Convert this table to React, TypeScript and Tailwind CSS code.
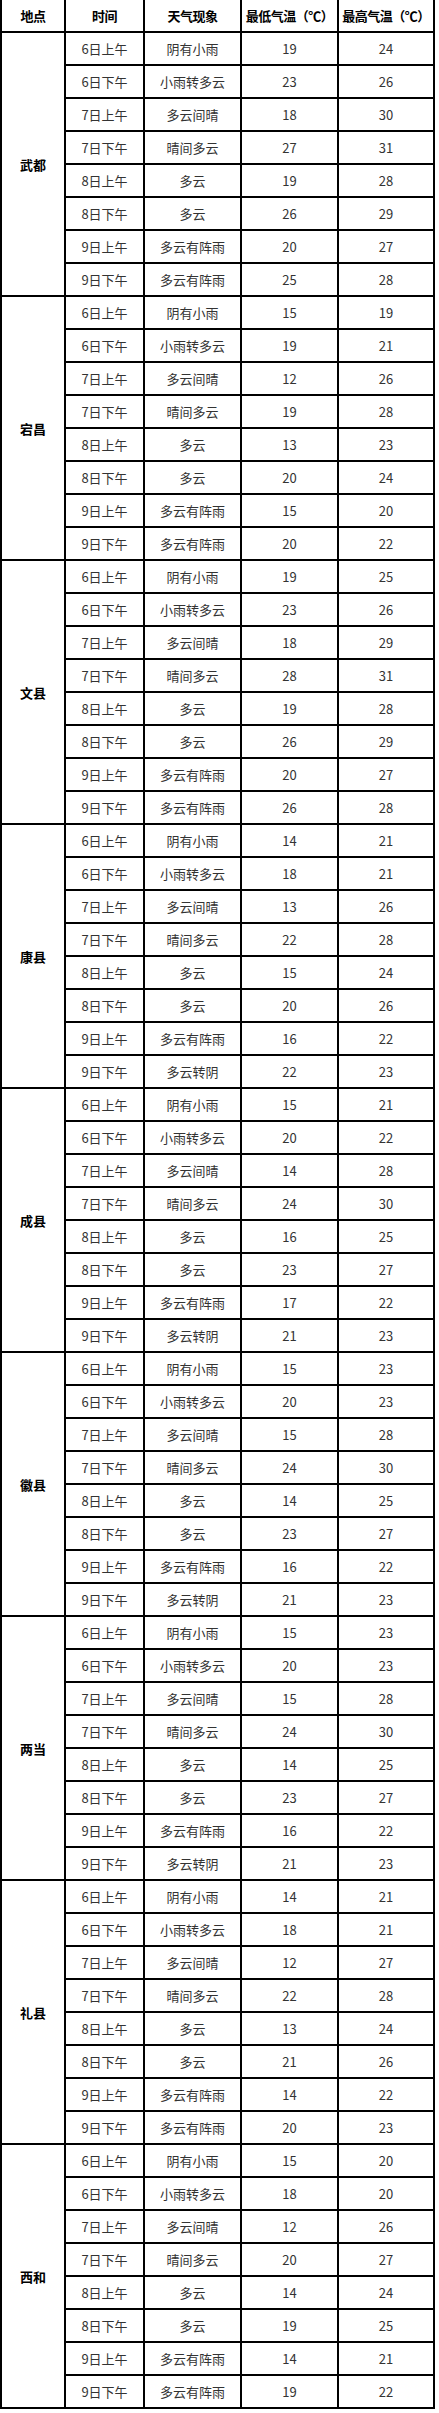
type Row = [string, string, number, number];

const TIMES = ["6日上午", "6日下午", "7日上午", "7日下午", "8日上午", "8日下午", "9日上午", "9日下午"];

const DATA: { place: string; rows: [string, number, number][] }[] = [
  {
    place: "武都",
    rows: [
      ["阴有小雨", 19, 24],
      ["小雨转多云", 23, 26],
      ["多云间晴", 18, 30],
      ["晴间多云", 27, 31],
      ["多云", 19, 28],
      ["多云", 26, 29],
      ["多云有阵雨", 20, 27],
      ["多云有阵雨", 25, 28],
    ],
  },
  {
    place: "宕昌",
    rows: [
      ["阴有小雨", 15, 19],
      ["小雨转多云", 19, 21],
      ["多云间晴", 12, 26],
      ["晴间多云", 19, 28],
      ["多云", 13, 23],
      ["多云", 20, 24],
      ["多云有阵雨", 15, 20],
      ["多云有阵雨", 20, 22],
    ],
  },
  {
    place: "文县",
    rows: [
      ["阴有小雨", 19, 25],
      ["小雨转多云", 23, 26],
      ["多云间晴", 18, 29],
      ["晴间多云", 28, 31],
      ["多云", 19, 28],
      ["多云", 26, 29],
      ["多云有阵雨", 20, 27],
      ["多云有阵雨", 26, 28],
    ],
  },
  {
    place: "康县",
    rows: [
      ["阴有小雨", 14, 21],
      ["小雨转多云", 18, 21],
      ["多云间晴", 13, 26],
      ["晴间多云", 22, 28],
      ["多云", 15, 24],
      ["多云", 20, 26],
      ["多云有阵雨", 16, 22],
      ["多云转阴", 22, 23],
    ],
  },
  {
    place: "成县",
    rows: [
      ["阴有小雨", 15, 21],
      ["小雨转多云", 20, 22],
      ["多云间晴", 14, 28],
      ["晴间多云", 24, 30],
      ["多云", 16, 25],
      ["多云", 23, 27],
      ["多云有阵雨", 17, 22],
      ["多云转阴", 21, 23],
    ],
  },
  {
    place: "徽县",
    rows: [
      ["阴有小雨", 15, 23],
      ["小雨转多云", 20, 23],
      ["多云间晴", 15, 28],
      ["晴间多云", 24, 30],
      ["多云", 14, 25],
      ["多云", 23, 27],
      ["多云有阵雨", 16, 22],
      ["多云转阴", 21, 23],
    ],
  },
  {
    place: "两当",
    rows: [
      ["阴有小雨", 15, 23],
      ["小雨转多云", 20, 23],
      ["多云间晴", 15, 28],
      ["晴间多云", 24, 30],
      ["多云", 14, 25],
      ["多云", 23, 27],
      ["多云有阵雨", 16, 22],
      ["多云转阴", 21, 23],
    ],
  },
  {
    place: "礼县",
    rows: [
      ["阴有小雨", 14, 21],
      ["小雨转多云", 18, 21],
      ["多云间晴", 12, 27],
      ["晴间多云", 22, 28],
      ["多云", 13, 24],
      ["多云", 21, 26],
      ["多云有阵雨", 14, 22],
      ["多云有阵雨", 20, 23],
    ],
  },
  {
    place: "西和",
    rows: [
      ["阴有小雨", 15, 20],
      ["小雨转多云", 18, 20],
      ["多云间晴", 12, 26],
      ["晴间多云", 20, 27],
      ["多云", 14, 24],
      ["多云", 19, 25],
      ["多云有阵雨", 14, 21],
      ["多云有阵雨", 19, 22],
    ],
  },
];

const HEADERS = ["地点", "时间", "天气现象", "最低气温（℃）", "最高气温（℃）"];

const cell = "bg-white flex items-center justify-center text-[13px] leading-none text-[#333] whitespace-nowrap";

export default function App() {
  return (
    <div
      className="min-h-[2413px] w-[439px] bg-white"
      style={{ fontFamily: '"Microsoft YaHei", "Noto Sans CJK SC", "Liberation Sans", sans-serif' }}
    >
      <div className="grid w-[435px] grid-cols-[62px_77px_95px_95px_94px] auto-rows-[31px] gap-[2px] bg-black px-[2px] pb-[2px]">
        {HEADERS.map((h) => (
          <div key={h} className={`${cell} font-bold text-black tracking-[-0.5px]`}>
            {h}
          </div>
        ))}
        {DATA.map((group) => {
          const rows: Row[] = group.rows.map((r, i) => [TIMES[i], r[0], r[1], r[2]]);
          return [
            <div key={group.place} className={`${cell} row-span-8 font-bold text-black`}>
              {group.place}
            </div>,
            ...rows.flatMap((r, i) => [
              <div key={`${group.place}-${i}-t`} className={cell}>{r[0]}</div>,
              <div key={`${group.place}-${i}-w`} className={cell}>{r[1]}</div>,
              <div key={`${group.place}-${i}-lo`} className={cell}>{r[2]}</div>,
              <div key={`${group.place}-${i}-hi`} className={cell}>{r[3]}</div>,
            ]),
          ];
        })}
      </div>
    </div>
  );
}
